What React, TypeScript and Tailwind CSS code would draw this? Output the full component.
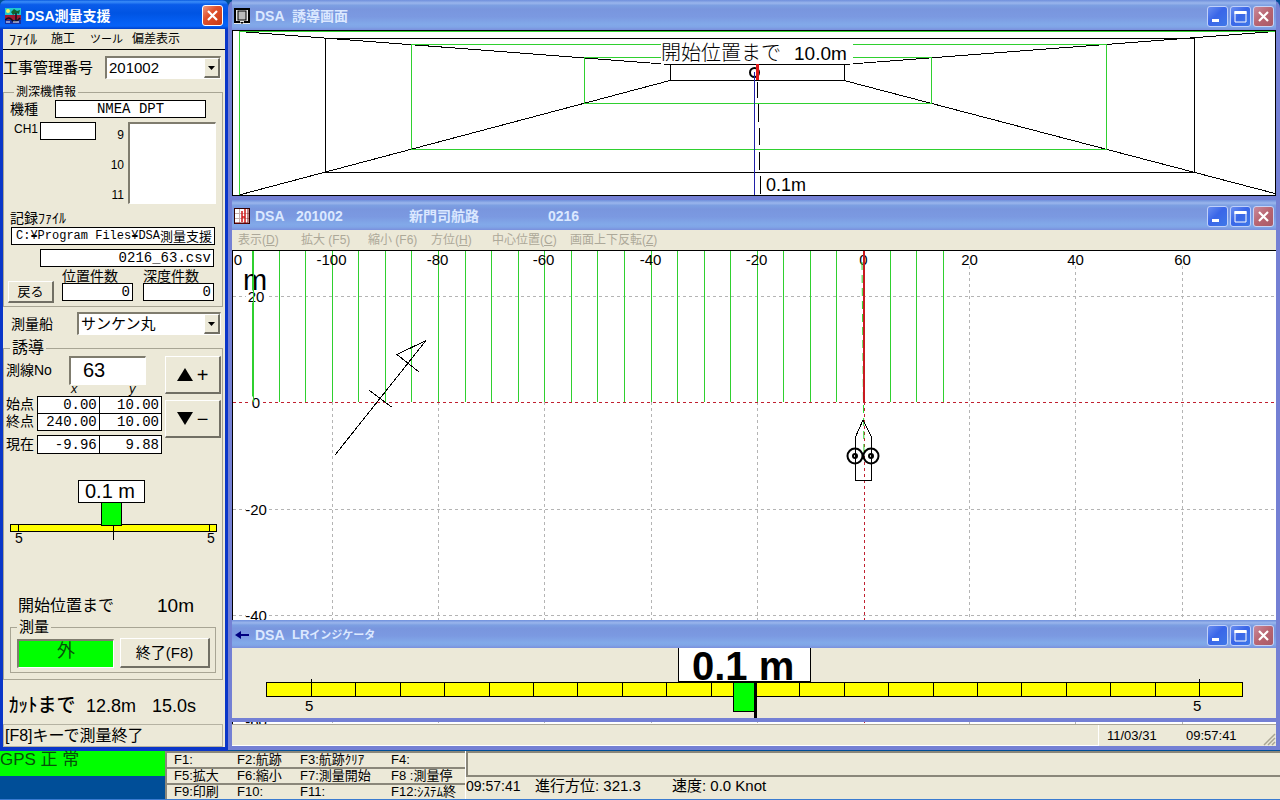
import React from "react";

const GREEN = "#2fd02f";
const ACTIVE_BAR =
  "bg-[linear-gradient(to_bottom,#0a5ae0,#3a8cf8_6%,#0a5cea_16%,#0054e3_45%,#0560f5_80%,#0662f8_90%,#0040c8)]";
const IDLE_BAR =
  "bg-[linear-gradient(to_bottom,#6f8fdc,#9ab6ec_10%,#7c9fe2_18%,#7996de_30%,#7b99e1_56%,#82a9e9_81%,#80a5e7_90%,#7a8fdc)]";
const RAISED =
  "border-t border-l border-r-2 border-b-2 border-t-white border-l-white border-r-[#716f64] border-b-[#716f64] bg-[#ece9d8]";
const SUNKEN =
  "border-t-2 border-l-2 border-r border-b border-t-[#7f7c6e] border-l-[#7f7c6e] border-r-white border-b-white";

function CloseButton({ active = false }: { active?: boolean }) {
  return (
    <button
      type="button"
      aria-label="閉じる"
      className={
        "flex size-[21px] items-center justify-center rounded-[3px] border " +
        (active
          ? "border-white bg-[linear-gradient(135deg,#f09a80,#e0502c_40%,#c83a14)]"
          : "border-[#c9d3f4] bg-[linear-gradient(135deg,#c98a9c,#b86470_50%,#a85a68)]")
      }
    >
      <svg width="13" height="13" viewBox="0 0 13 13">
        <path d="M2 2L11 11M11 2L2 11" stroke="#fff" strokeWidth="2.2" />
      </svg>
    </button>
  );
}

function BlueButton({ label, children }: { label: string; children: React.ReactNode }) {
  return (
    <button
      type="button"
      aria-label={label}
      className="flex size-[21px] items-center justify-center rounded-[3px] border border-[#c0d0fa] bg-[linear-gradient(135deg,#6a8ef0,#3a66e8_45%,#3f78e8)]"
    >
      <svg width="15" height="15" viewBox="0 0 15 15">
        {children}
      </svg>
    </button>
  );
}

function IdleTitle({ icon, children, tall = true }: { icon: React.ReactNode; children: React.ReactNode; tall?: boolean }) {
  return (
    <header className={"flex items-center px-0.5 pt-0.5 " + IDLE_BAR + (tall ? " h-[30px]" : " h-7")}>
      <span className="w-5 shrink-0">{icon}</span>
      <h2 className="flex flex-1 items-center pl-px text-[14px] leading-4 font-bold text-[#dbe8ff]">{children}</h2>
      <div className="flex gap-0.5">
        <BlueButton label="最小化">
          <rect x="2" y="10" width="7" height="3" fill="#fff" />
        </BlueButton>
        <BlueButton label="最大化">
          <path d="M2 2.5H13V13H2Z" fill="none" stroke="#fff" strokeWidth="1" />
          <rect x="1.5" y="2" width="12" height="3" fill="#fff" />
        </BlueButton>
        <CloseButton />
      </div>
    </header>
  );
}

function DropDown({ id, value, className }: { id: string; value: string; className: string }) {
  return (
    <div className={"relative h-[23px] " + className}>
      <select
        id={id}
        defaultValue={value}
        className={"h-full w-full appearance-none bg-white pl-0.5 text-[15px] leading-[18px] outline-none " + SUNKEN}
      >
        <option>{value}</option>
      </select>
      <span
        className={
          "pointer-events-none absolute top-0.5 right-px bottom-px flex w-4 items-center justify-center " + RAISED
        }
      >
        <svg width="7" height="4" viewBox="0 0 7 4">
          <path d="M0 0H7L3.5 4Z" />
        </svg>
      </span>
    </div>
  );
}

function Box({ id, children, className = "" }: { id?: string; children?: React.ReactNode; className?: string }) {
  return (
    <output
      id={id}
      className={
        "block h-[18px] border border-black bg-white px-0.5 font-['Liberation_Mono','Noto_Sans_CJK_JP',monospace] text-[14px] leading-4 " +
        className
      }
    >
      {children}
    </output>
  );
}

function Legend({ children, className }: { children: React.ReactNode; className: string }) {
  return <legend className={"ml-1.5 px-0.5 " + className}>{children}</legend>;
}

function StartEndTable() {
  const th = "w-[31px] text-left text-[14px] leading-4 font-normal";
  const td = "border border-black bg-white pr-0.5 text-right text-[14px] leading-4";
  return (
    <table className="w-[156px] table-fixed border-collapse font-['Liberation_Mono','Noto_Sans_CJK_JP',monospace]">
      <thead>
        <tr className="text-[12px] leading-3 italic">
          <td className="w-[31px]" />
          <th className="pl-3 font-normal">x</th>
          <th className="pl-1 font-normal">y</th>
        </tr>
      </thead>
      <tbody>
        <tr className="h-[17px]">
          <th className={th}>始点</th>
          <td className={td}>0.00</td>
          <td className={td}>10.00</td>
        </tr>
        <tr className="h-[17px]">
          <th className={th}>終点</th>
          <td className={td}>240.00</td>
          <td className={td}>10.00</td>
        </tr>
        <tr className="h-[5px]" />
        <tr className="h-[18px]">
          <th className={th}>現在</th>
          <td className={td}>-9.96</td>
          <td className={td}>9.88</td>
        </tr>
      </tbody>
    </table>
  );
}

function SmallGauge() {
  return (
    <svg viewBox="4 476 218 70" className="w-full">
      <rect x="10.500" y="524.500" width="206" height="7" fill="#ff0" stroke="#000" />
      <path d="M18.500 524V532M209.500 524V532M113.500 526V540" stroke="#000" />
      <rect x="101.500" y="502.500" width="20" height="23" fill="#0f0" stroke="#000" />
      <rect x="78.500" y="480.500" width="66" height="22" fill="#fff" stroke="#000" />
      <text x="85" y="498" fontSize="20">0.1 m</text>
      <text x="15" y="543" fontSize="14">5</text>
      <text x="207" y="543" fontSize="14">5</text>
    </svg>
  );
}

function SupportWindow() {
  return (
    <section className="flex w-[228px] shrink-0 flex-col rounded-t-lg border-x-[3px] border-b-4 border-[#0a36c8] bg-[#ece9d8]">
      <header className={"-mx-[3px] flex h-[29px] items-center rounded-t-md pt-0.5 pr-[5px] pl-[5px] " + ACTIVE_BAR}>
        <svg width="16" height="16" viewBox="0 0 16 16">
          <rect width="16" height="7" fill="#20c8d0" />
          <rect y="7" width="16" height="5" fill="#a01830" />
          <rect y="12" width="16" height="4" fill="#1830a0" />
          <circle cx="3" cy="3" r="2" fill="#f8f060" />
          <path d="M6 4L9 1L12 3L15 2L14 6L11 5L8 7Z" fill="#106030" />
          <path d="M11 5V13M0 12Q4 8 7 12T15 10" stroke="#101020" strokeWidth="1.500" fill="none" />
          <path d="M1 14H5M8 14H14" stroke="#fff" />
        </svg>
        <h1 className="flex-1 pl-1 text-[14px] leading-4 font-bold text-white">DSA測量支援</h1>
        <CloseButton active />
      </header>

      <nav className="grid h-[21px] grid-cols-[42px_39px_42px_1fr] items-center border-b border-black pl-1.5 text-[12px] leading-4">
        <button type="button" className="text-left text-[14px]">ﾌｧｲﾙ</button>
        <button type="button" className="text-left">施工</button>
        <button type="button" className="text-left text-[11px]">ツール</button>
        <button type="button" className="text-left">偏差表示</button>
      </nav>

      <div className="flex h-[35px] items-center justify-between pr-1">
        <label htmlFor="work" className="text-[15px] leading-5">工事管理番号</label>
        <DropDown id="work" value="201002" className="w-[116px]" />
      </div>

      <fieldset className="mr-0.5 h-[222px] border border-[#a8a594] pl-1">
        <Legend className="text-[12px] leading-[14px]">測深機情報</Legend>
        <div className="flex h-[19px] items-center">
          <label htmlFor="model" className="w-[47px] pl-0.5 text-[14px] leading-4">機種</label>
          <Box id="model" className="w-[151px] text-center">NMEA DPT</Box>
        </div>
        <div className="mt-1 flex h-[82px]">
          <label htmlFor="ch1" className="w-8 pl-1.5 text-[12px] leading-[14px]">CH1</label>
          <Box id="ch1" className="w-[56px]" />
          <div className="flex flex-1 flex-col justify-between pt-1 pr-1 text-right text-[12px] leading-[18px]">
            <span>9</span>
            <span>10</span>
            <span>11</span>
          </div>
          <div className={"mr-1.5 h-[82px] w-[88px] bg-white " + SUNKEN} />
        </div>
        <p className="mt-[5px] pl-0.5 text-[14px] leading-[18px]">記録ﾌｧｲﾙ</p>
        <div className="ml-[3px] flex h-[18px] w-[204px] items-center border border-black bg-white pl-1 font-['Liberation_Mono',monospace] text-[12px] leading-4 whitespace-nowrap">
          C:¥Program Files¥DSA<span className="font-['Noto_Sans_CJK_JP',sans-serif] text-[13px]">測量支援</span>
        </div>
        <Box className="mt-1 ml-8 w-[174px] text-right">0216_63.csv</Box>
        <div className="mt-0.5 flex items-end">
          <button type="button" className={"h-[22px] w-[46px] text-[13px] leading-4 " + RAISED}>戻る</button>
          <div className="ml-2 w-[71px] pb-0.5">
            <label htmlFor="npos" className="block text-[14px] leading-[14px]">位置件数</label>
            <Box id="npos" className="text-right">0</Box>
          </div>
          <div className="ml-2.5 w-[71px] pb-0.5">
            <label htmlFor="ndep" className="block text-[14px] leading-[14px]">深度件数</label>
            <Box id="ndep" className="text-right">0</Box>
          </div>
        </div>
      </fieldset>

      <div className="flex h-[33px] items-center justify-between pr-1 pl-2">
        <label htmlFor="ship" className="text-[14px] leading-5">測量船</label>
        <DropDown id="ship" value="サンケン丸" className="w-[144px]" />
      </div>

      <fieldset className="mr-0.5 h-[340px] border border-[#a8a594]">
        <Legend className="text-[16px] leading-4">誘導</Legend>
        <div className="flex justify-between">
          <div className="pl-0.5">
            <div className="flex h-7 items-center">
              <label htmlFor="line" className="w-[63px] text-[14px] leading-4">測線No</label>
              <input
                id="line"
                defaultValue="63"
                className={"h-[29px] w-[77px] bg-white pl-3 text-[20px] leading-6 outline-none " + SUNKEN}
              />
            </div>
            <StartEndTable />
          </div>
          <div className="flex flex-col gap-1.5 pr-px">
            <button
              type="button"
              aria-label="測線を進める"
              className={"flex h-[38px] w-[56px] items-center justify-center gap-1 text-[20px] leading-5 " + RAISED}
            >
              <svg width="16" height="13" viewBox="0 0 16 13"><path d="M8 0L16 13H0Z" /></svg>
              +
            </button>
            <button
              type="button"
              aria-label="測線を戻す"
              className={"flex h-[38px] w-[56px] items-center justify-center gap-1 text-[20px] leading-5 " + RAISED}
            >
              <svg width="16" height="13" viewBox="0 0 16 13"><path d="M0 0H16L8 13Z" /></svg>
              −
            </button>
          </div>
        </div>
        <div className="mt-[22px]">
          <SmallGauge />
        </div>
        <div className="mt-[46px] flex h-[27px] items-center pl-3.5">
          <span className="w-[139px] text-[16px] leading-5">開始位置まで</span>
          <span className="text-[19px] leading-5">10m</span>
        </div>
        <fieldset className="mr-1.5 ml-1.5 h-[54px] border border-[#a8a594]">
          <Legend className="text-[15px] leading-4">測量</Legend>
          <div className="flex items-center gap-1.5 pt-[3px] pl-1.5">
            <output className={"block h-[29px] w-[97px] bg-[#0f0] text-center text-[18px] leading-5 text-[#06500a] " + SUNKEN}>
              外
            </output>
            <button type="button" className={"h-[30px] w-[90px] text-[15px] leading-5 " + RAISED}>終了(F8)</button>
          </div>
        </fieldset>
      </fieldset>

      <p className="flex h-11 items-center pt-2 pl-1.5 text-[18px] leading-6 font-medium">
        <span className="w-[77px] text-[19px]">ｶｯﾄまで</span>
        <span className="w-[66px]">12.8m</span>
        <span>15.0s</span>
      </p>
      <p className="mr-0.5 flex-1 border border-[#b5b2a2] pl-px text-[16px] leading-[21px]">[F8]キーで測量終了</p>
    </section>
  );
}

function GuideView() {
  return (
    <svg viewBox="232 30 1044 166" className="w-full bg-white">
      <g fill="none" stroke="#000" shapeRendering="crispEdges">
        <path d="M239 31.500L670 64.500M239 195L670 80.500M844 64.500L1275 31.500M844 80.500L1275 193.500" />
        <path d="M239.500 195V31.500H1275" stroke={GREEN} />
        <rect x="325.500" y="38.500" width="869" height="134" />
        <rect x="411.500" y="44.500" width="695" height="105" stroke={GREEN} />
        <rect x="584.500" y="57.500" width="347" height="46" stroke={GREEN} />
        <rect x="670.500" y="64.500" width="174" height="16" />
        <rect x="232.500" y="30.500" width="1043" height="165" />
      </g>
      <rect x="661" y="41" width="192" height="23" fill="#fff" />
      <text x="661" y="60" fontSize="20" fontWeight="300">開始位置まで</text>
      <text x="794" y="60" fontSize="19">10.0m</text>
      <circle cx="754.500" cy="72.500" r="4.500" fill="none" stroke="#000" strokeWidth="2" />
      <g shapeRendering="crispEdges">
        <path d="M754.500 72V195" stroke="#2020a8" />
        <path d="M757.500 64V80" stroke="#e01818" strokeWidth="3" />
        <path d="M757.500 82V98M758.500 104V122M759.500 128V145M759.500 152V170M760.500 176V194" stroke="#000" />
      </g>
      <text x="766" y="191" fontSize="18">0.1m</text>
    </svg>
  );
}

const LINE_STEP = 26.56;
const surveyLines = Array.from({ length: 27 }, (_, i) => Math.round(864 + (i - 23) * LINE_STEP) - 0.5);
const gridColumns = [-100, -80, -60, -40, -20, 0, 20, 40, 60].map((m) => ({
  m,
  x: Math.round(864 + m * 5.31) - 0.5,
}));
const gridRows = [
  { m: 20, y: 296.5 },
  { m: 0, y: 402.5 },
  { m: -20, y: 509.5 },
  { m: -40, y: 615.5 },
  { m: -60, y: 721.5 },
];

function MapView() {
  return (
    <svg viewBox="232 250 1044 474" className="w-full bg-white">
      <g shapeRendering="crispEdges" fill="none" strokeDasharray="3 3">
        {gridColumns.map(({ m, x }) => (
          <path key={m} d={`M${m === 0 ? 864.5 : x} ${m > 0 ? 266 : 402}V724`} stroke={m === 0 ? "#c02030" : "#b4b4b4"} />
        ))}
        {gridRows.map(({ m, y }) => (
          <path key={m} d={`M233 ${y}H1276`} stroke={m === 0 ? "#c02030" : "#b4b4b4"} />
        ))}
      </g>
      <g shapeRendering="crispEdges">
        {surveyLines.map((x) => (
          <path key={x} d={`M${x} 251V402`} stroke={GREEN} />
        ))}
      </g>
      <g fontSize="15" textAnchor="middle">
        <text x="238" y="265">0</text>
        {gridColumns.map(({ m, x }) => (
          <text key={m} x={m < 0 ? x - 1 : x} y="265">{m}</text>
        ))}
        {gridRows.map(({ m, y }) => (
          <g key={m}>
            <rect x={m === 0 ? 251 : 246} y={y - 6} width={m === 0 ? 11 : 20} height="12" fill="#fff" />
            <text x="256" y={y + 5}>{m}</text>
          </g>
        ))}
      </g>
      <text x="243" y="290" fontSize="29">m</text>
      <path d="M253.500 251V402" stroke={GREEN} shapeRendering="crispEdges" />
      <path d="M862 262L864 456" stroke={GREEN} strokeDasharray="8 5" />
      <path d="M864 251V402" stroke="#c81a20" strokeWidth="2" shapeRendering="crispEdges" />
      <g fill="none" stroke="#000">
        <g shapeRendering="crispEdges">
          <path d="M335 455L426 340.500L397 354.500L419 372M369 390L391.500 407" />
          <path d="M863 420L855.500 437V480.500H871.500V437Z" />
        </g>
        <circle cx="855" cy="456" r="7.500" strokeWidth="2" />
        <circle cx="871" cy="456" r="7.500" strokeWidth="2" />
        <circle cx="855" cy="456" r="2" strokeWidth="2" />
        <circle cx="871" cy="456" r="2" strokeWidth="2" />
        <path d="M232 250.500H1276M232.500 250V724" shapeRendering="crispEdges" />
      </g>
    </svg>
  );
}

function IndicatorView() {
  const ticks = Array.from({ length: 21 }, (_, i) => Math.round(755 + (i - 10) * 44.4) + 0.5);
  return (
    <svg viewBox="232 648 1044 70" className="w-full bg-[#ece9d8]">
      <g shapeRendering="crispEdges">
        <rect x="266.500" y="682.500" width="976" height="14" fill="#ff0" stroke="#000" />
        {ticks.map((x) => (
          <path key={x} d={`M${x} 683V696`} stroke="#000" />
        ))}
        <path d="M311.500 679V697M1199.500 679V697" stroke="#000" />
        <rect x="733.500" y="682.500" width="21" height="29" fill="#0f0" stroke="#000" />
        <path d="M755.500 683V718" stroke="#000" strokeWidth="3" />
        <path d="M678.500 648V681.500H810.500V648" fill="#fff" stroke="#000" />
      </g>
      <text x="692" y="680" fontSize="40" fontWeight="700">0.1 m</text>
      <text x="305" y="711" fontSize="15">5</text>
      <text x="1193" y="711" fontSize="15">5</text>
    </svg>
  );
}

const mapMenu = [
  ["表示", "D"],
  ["拡大 (F5)", ""],
  ["縮小 (F6)", ""],
  ["方位", "H"],
  ["中心位置", "C"],
  ["画面上下反転", "Z"],
];

const keyRows = [
  ["F1:", "F2:航跡", "F3:航跡ｸﾘｱ", "F4:"],
  ["F5:拡大", "F6:縮小", "F7:測量開始", "F8 :測量停"],
  ["F9:印刷", "F10:", "F11:", "F12:ｼｽﾃﾑ終"],
];

export default function App() {
  return (
    <main className="flex min-h-screen w-full flex-col bg-[#004e98] font-['Liberation_Sans','Noto_Sans_CJK_JP',sans-serif] text-black">
      <div className="flex">
        <SupportWindow />
        <div className="min-w-0 flex-1">
          <section className="rounded-t-lg border-x-4 border-b-4 border-[#7480d4]">
            <IdleTitle
              icon={
                <svg width="16" height="16" viewBox="0 0 16 16">
                  <rect width="16" height="16" fill="#e8e8e8" />
                  <path d="M0 1H16M1 0V14M15 0V14M0 14H6M10 14H16" stroke="#000" strokeWidth="2" />
                  <rect x="4" y="3" width="8" height="9" fill="#bbb" stroke="#000" />
                  <path d="M6 14L8 16L10 14Z" />
                </svg>
              }
            >
              <span className="w-[37px]">DSA</span>
              <span>誘導画面</span>
            </IdleTitle>
            <GuideView />
          </section>

          <div className="relative">
            <section className="border-x-4 border-b-4 border-[#7480d4] bg-[#ece9d8]">
              <IdleTitle
                icon={
                  <svg width="16" height="16" viewBox="0 0 16 16">
                    <rect x="0.500" y="0.500" width="15" height="15" fill="#fff" stroke="#300" />
                    <path d="M5.500 1V15M1 5.500H15M1 10.500H15" stroke="#c8b0b0" />
                    <path d="M8 3V14M11 1V15M8 9H11" stroke="#d01818" strokeWidth="1.500" />
                    <path d="M14 1V15H1" stroke="#801010" fill="none" />
                  </svg>
                }
              >
                <span className="w-[41px]">DSA</span>
                <span className="w-[113px]">201002</span>
                <span className="w-[139px]">新門司航路</span>
                <span>0216</span>
              </IdleTitle>
              <nav className="grid h-5 grid-cols-[63px_67px_63px_61px_78px_1fr] items-center pl-1.5 text-[12px] leading-4 text-[#aca899]">
                {mapMenu.map(([label, key]) => (
                  <button key={label} type="button" className="text-left whitespace-nowrap">
                    {label}
                    {key && (
                      <>
                        (<span className="underline">{key}</span>)
                      </>
                    )}
                  </button>
                ))}
              </nav>
              <MapView />
              <footer className="flex h-[22px] items-center border-t border-[#aca899] text-[13px] leading-4">
                <span className="h-full flex-1 border-r border-b border-white" />
                <span className="w-[87px] pl-2">11/03/31</span>
                <span className="w-[76px]">09:57:41</span>
                <svg width="14" height="14" viewBox="0 0 14 14" className="self-end">
                  <path d="M2 13L13 2M6 13L13 6M10 13L13 10" stroke="#a8a594" strokeWidth="1.500" />
                </svg>
              </footer>
            </section>

            <section className="absolute inset-x-0 bottom-7 border-x-4 border-b-4 border-[#7480d4]">
              <IdleTitle
                tall={false}
                icon={
                  <svg width="16" height="16" viewBox="0 0 16 16">
                    <path d="M1 8L7 4V7H15V9H7V12Z" fill="#000080" />
                  </svg>
                }
              >
                <span className="w-[37px]">DSA</span>
                <span className="text-[13px]">LR</span>
                <span className="text-[11px]">インジケータ</span>
              </IdleTitle>
              <IndicatorView />
            </section>
          </div>
        </div>
      </div>

      <footer className="flex h-[50px] border-b-2 border-[#3a7bd0]">
        <div className="w-[165px] shrink-0">
          <p className="h-[25px] bg-[#0f0] text-[17px] leading-[18px] text-[#06500a]">GPS 正 常</p>
        </div>
        <div className="flex w-[301px] shrink-0 flex-col border-r border-white bg-[#ece9d8]">
          {keyRows.map((row) => (
            <div
              key={row[0]}
              className="grid flex-1 grid-cols-[63px_63px_91px_1fr] items-center border-t-2 border-l-2 border-[#8a877a] pl-[7px] text-[13px] leading-[14px] whitespace-nowrap"
            >
              {row.map((cell) => (
                <span key={cell}>{cell}</span>
              ))}
            </div>
          ))}
        </div>
        <div className="flex flex-1 flex-col bg-[#ece9d8]">
          <div className="h-[24px] border-t-2 border-l-2 border-[#8a877a]" />
          <div className="flex flex-1 items-start border-t-2 border-[#8a877a] text-[15px] leading-[18px]">
            <span className="w-[69px] text-[14px]">09:57:41</span>
            <span className="w-[137px]">進行方位: 321.3</span>
            <span>速度: 0.0 Knot</span>
          </div>
        </div>
      </footer>
    </main>
  );
}
